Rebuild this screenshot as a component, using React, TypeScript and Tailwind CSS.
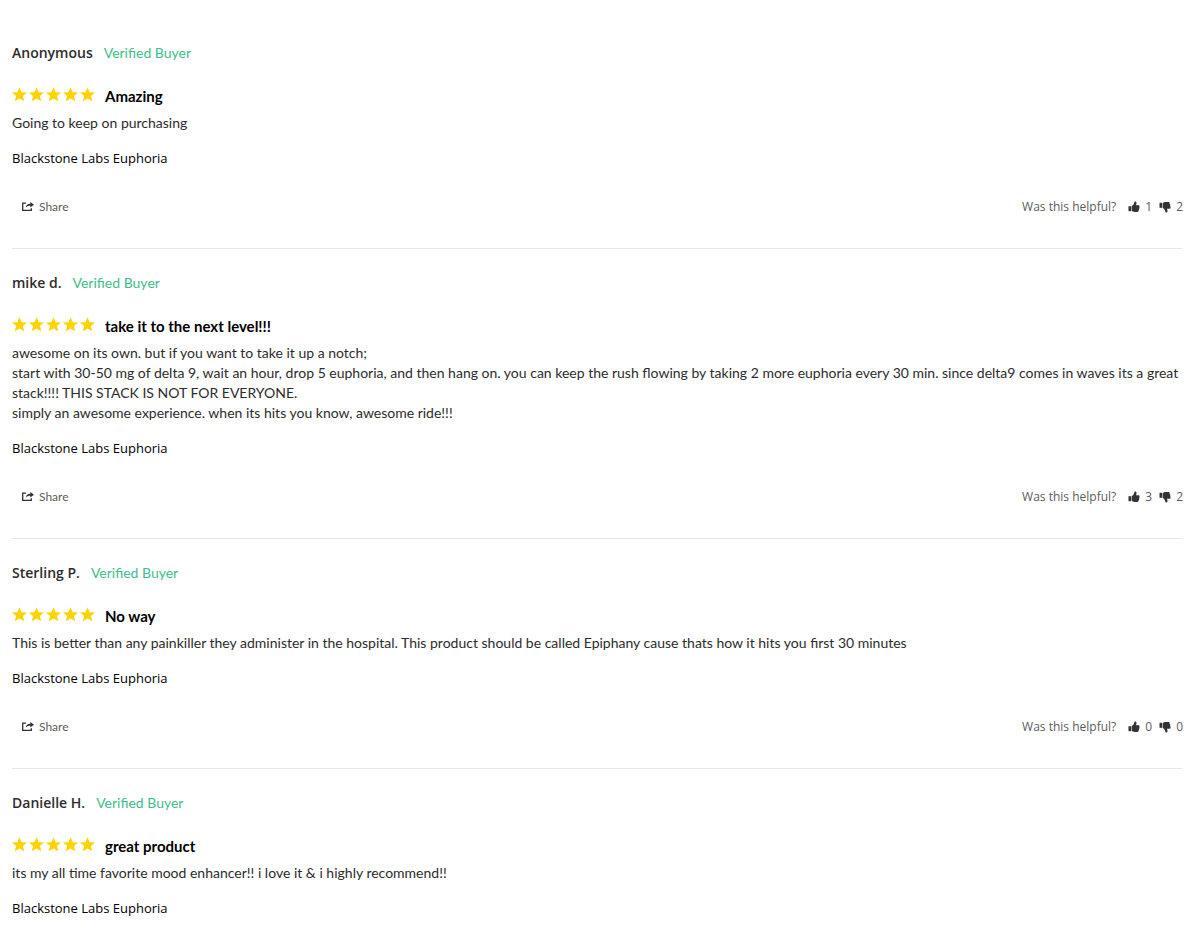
type Review = {
  name: string;
  title: string;
  lines: string[];
  votes?: { up: number; down: number };
};

const reviews: Review[] = [
  {
    name: "Anonymous",
    title: "Amazing",
    lines: ["Going to keep on purchasing"],
    votes: { up: 1, down: 2 },
  },
  {
    name: "mike d.",
    title: "take it to the next level!!!",
    lines: [
      "awesome on its own. but if you want to take it up a notch;",
      "start with 30-50 mg of delta 9, wait an hour, drop 5 euphoria, and then hang on. you can keep the rush flowing by taking 2 more euphoria every 30 min. since delta9 comes in waves its a great stack!!!! THIS STACK IS NOT FOR EVERYONE.",
      "simply an awesome experience. when its hits you know, awesome ride!!!",
    ],
    votes: { up: 3, down: 2 },
  },
  {
    name: "Sterling P.",
    title: "No way",
    lines: [
      "This is better than any painkiller they administer in the hospital. This product should be called Epiphany cause thats how it hits you first 30 minutes",
    ],
    votes: { up: 0, down: 0 },
  },
  {
    name: "Danielle H.",
    title: "great product",
    lines: ["its my all time favorite mood enhancer!! i love it & i highly recommend!!"],
  },
];

function Stars() {
  return (
    <div role="img" aria-label="5 out of 5 stars" className="flex gap-0.5 pb-1">
      {[1, 2, 3, 4, 5].map((n) => (
        <svg key={n} viewBox="0 0 15 15" className="size-[15px] fill-[#ffd200]">
          <path d="M7.500.2 9.600 5.200 15 5.600 10.900 9.100 12.200 14.300 7.500 11.500 2.800 14.300 4.100 9.100 0 5.600 5.400 5.200Z" />
        </svg>
      ))}
    </div>
  );
}

function ShareIcon() {
  return (
    <svg viewBox="0 0 12 10" className="h-2.5 w-3" aria-hidden="true">
      <path d="M4 1.200H.700V8.300H9.300V6.200" fill="none" stroke="#333" strokeWidth="1.300" />
      <path d="M8.300 0 12 2.800 8.300 5.600V3.700C6.300 3.600 5 4 3.800 5.400 4 3.200 5.500 1.900 8.300 1.800Z" fill="#333" />
    </svg>
  );
}

function Thumb({ down = false }: { down?: boolean }) {
  return (
    <svg viewBox="0 0 12 12" className={down ? "size-3 -scale-y-100" : "size-3"} fill="#333" aria-hidden="true">
      <path d="M.5 5.200H3v5H.500Z" />
      <path d="M3.600 5.300C5.200 4.500 6 3 6.300 1.200 6.500.200 8.400.200 8.500 1.700 8.600 2.700 8.300 3.400 8 4.200H10.600C11.800 4.200 11.900 5.600 11.200 6 11.700 6.500 11.600 7.500 11 7.800 11.300 8.400 11.100 9.200 10.500 9.500 10.700 10.400 10.100 10.900 9.200 10.900H6.800C5.500 10.900 4.700 10.300 3.600 10Z" />
    </svg>
  );
}

function ReviewItem({ review }: { review: Review }) {
  return (
    <article className="border-b border-[#e8e8e8] pt-6 pb-[31px] last:border-b-0 last:pb-0">
      <header className="flex items-center gap-[11px] leading-5">
        <span className="font-['Open_Sans',sans-serif] text-sm leading-5 font-semibold text-[#2c2c2c]">{review.name}</span>
        <span className="text-sm leading-5 text-[#3dbe8b]">Verified Buyer</span>
      </header>
      <div className="mt-[23px] flex h-5 items-center gap-2.5">
        <Stars />
        <h3 className="text-[15px] leading-5 font-bold text-black">{review.title}</h3>
      </div>
      <div className="mt-[7px] text-sm leading-5 text-[#2c2c2c]">
        {review.lines.map((line) => (
          <p key={line}>{line}</p>
        ))}
      </div>
      <a href="#product" className="mt-[15px] block w-fit font-['Open_Sans',sans-serif] text-[13px] leading-5 text-black">
        Blackstone Labs Euphoria
      </a>
      {review.votes && (
        <footer className="mt-[29px] flex h-5 items-center justify-between text-xs text-[#5c5c5c]">
          <button type="button" className="ml-2.5 flex items-center gap-[5px] leading-5">
            <ShareIcon />
            Share
          </button>
          <div className="flex items-center font-['Open_Sans',sans-serif] leading-5">
            <span className="mr-3">Was this helpful?</span>
            <button type="button" aria-label="Helpful" className="mr-[7px] flex items-center gap-[5px]">
              <Thumb />
              {review.votes.up}
            </button>
            <button type="button" aria-label="Not helpful" className="flex items-center gap-[5px]">
              <Thumb down />
              {review.votes.down}
            </button>
          </div>
        </footer>
      )}
    </article>
  );
}

export default function App() {
  return (
    <main className="bg-white pt-[19px] pr-3.5 pl-3 font-[Lato,sans-serif]">
      {reviews.map((review) => (
        <ReviewItem key={review.name} review={review} />
      ))}
    </main>
  );
}
